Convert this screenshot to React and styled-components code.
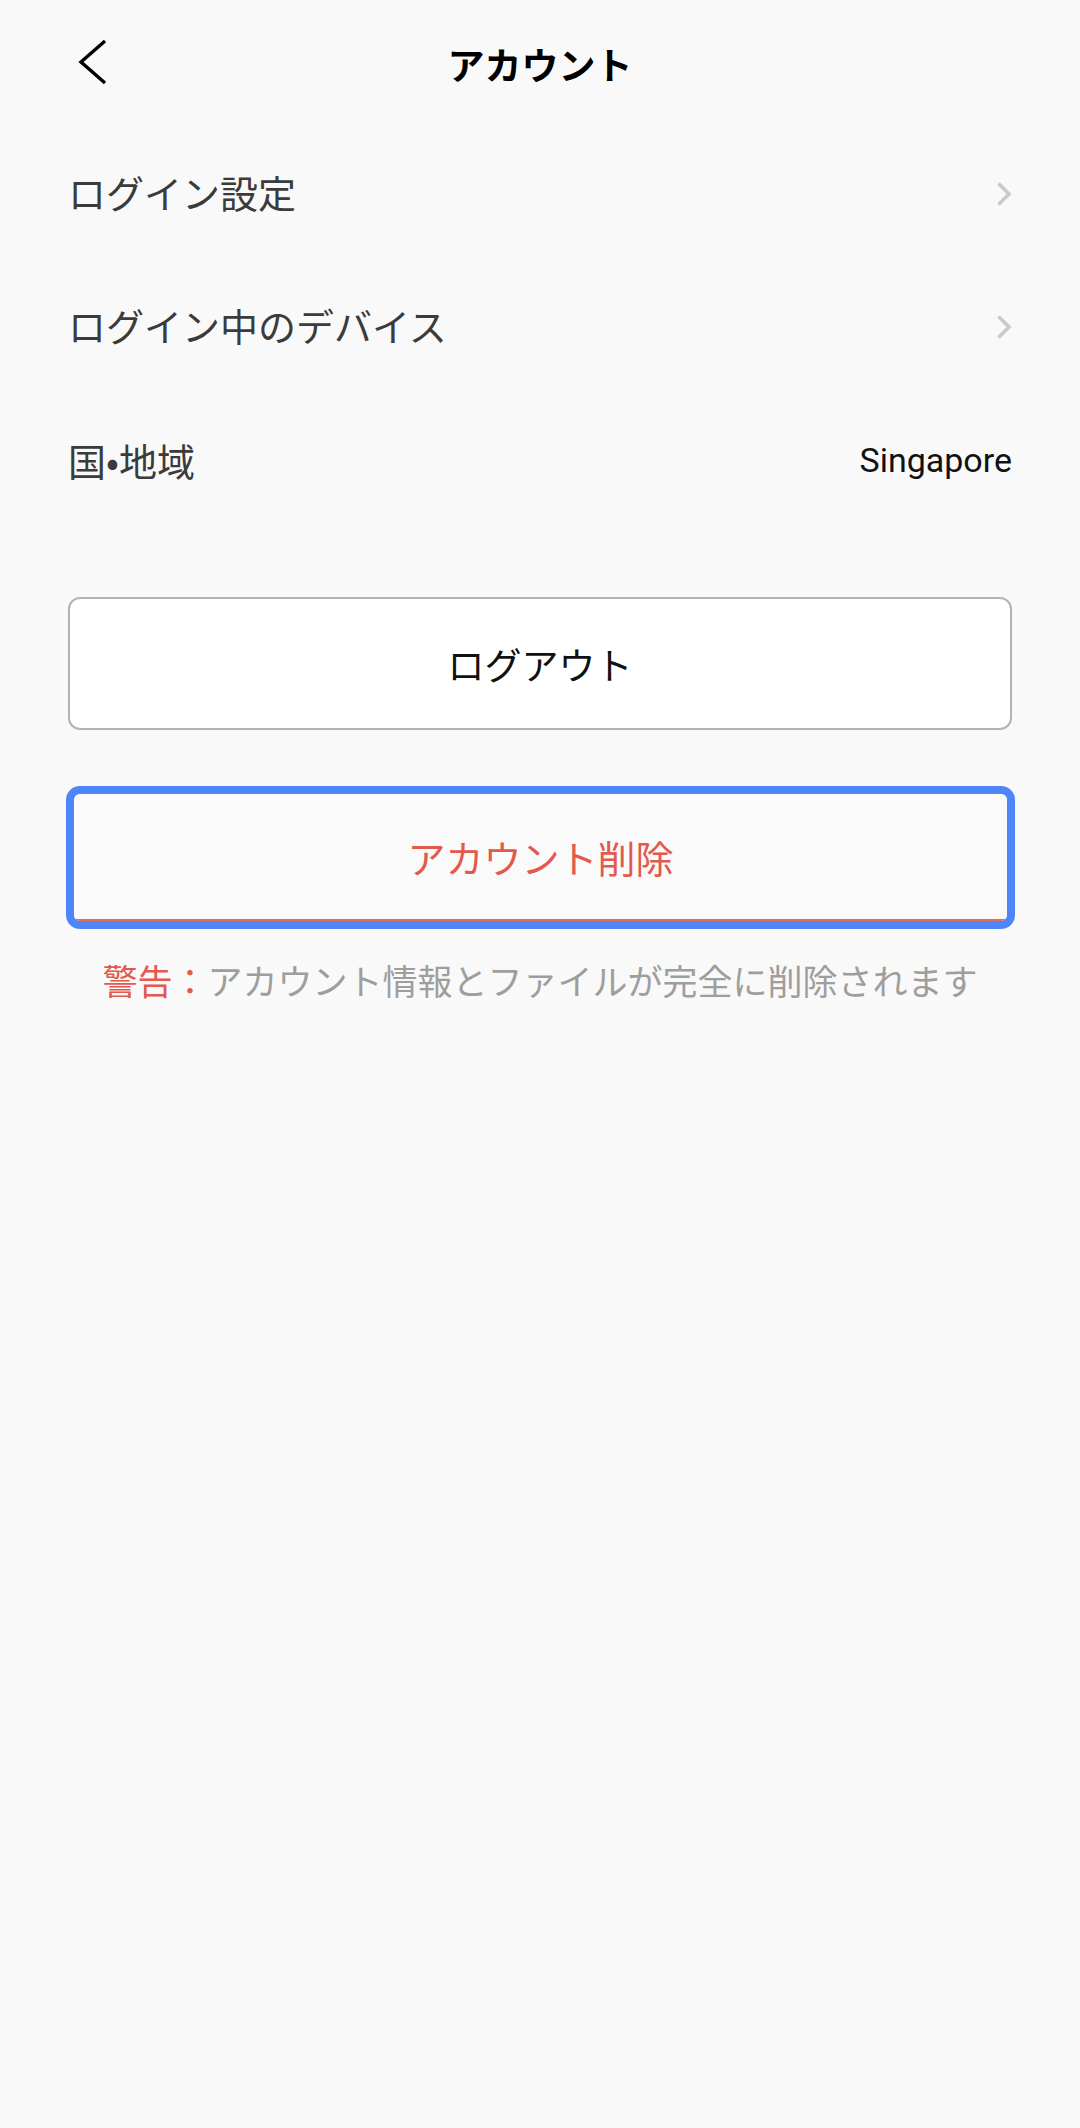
import React from "react";
import styled, { createGlobalStyle } from "styled-components";

const Global = createGlobalStyle`
  html, body { margin: 0; padding: 0; background: #f9f9f9; }
  body { font-family: "Noto Sans CJK JP", "Roboto", sans-serif; }
  * { box-sizing: border-box; }
`;

const Page = styled.div`
  width: 1080px;
  min-height: 2128px;
  background: #f9f9f9;
  display: flex;
  flex-direction: column;
`;

const Header = styled.header`
  height: 128px;
  display: grid;
  grid-template-columns: 1fr auto 1fr;
  align-items: center;
`;

const BackButton = styled.button`
  justify-self: start;
  margin-left: 78px;
  margin-top: -4px;
  padding: 0;
  border: 0;
  background: none;
  display: flex;
`;

const Title = styled.h1`
  margin: 0;
  font-size: 37px;
  font-weight: 700;
  color: #000;
  line-height: 1;
`;

const List = styled.div`
  display: flex;
  flex-direction: column;
  padding: 0 68px;
`;

const Row = styled.div`
  height: ${(p) => p.$h || 134}px;
  display: flex;
  align-items: center;
  justify-content: space-between;
`;

const Label = styled.span`
  font-size: 38px;
  color: #3b3b3b;
  line-height: 1;
  margin-top: -5px;
`;

const Value = styled.span`
  font-family: "Roboto", sans-serif;
  font-size: 34px;
  color: #111;
  line-height: 1;
  margin-top: -4px;
`;

const Actions = styled.div`
  display: flex;
  flex-direction: column;
  padding: 67px 68px 0;
`;

const OutlineButton = styled.button`
  height: 133px;
  width: 100%;
  background: #fff;
  border: 2px solid #b3b3b3;
  border-radius: 12px;
  font-family: "Noto Sans CJK JP", sans-serif;
  font-size: 37px;
  color: #111;
`;

const FocusRing = styled.div`
  margin: 56px -3px 0 -2px;
  border: 8px solid #4f86f7;
  border-radius: 14px;
  overflow: hidden;
`;

const DangerButton = styled.button`
  height: 127px;
  width: 100%;
  display: block;
  background: #fafafa;
  border: 0;
  border-bottom: 2px solid #e46a60;
  border-radius: 4px;
  font-family: "Noto Sans CJK JP", sans-serif;
  font-size: 38px;
  color: #e2594e;
`;

const Warning = styled.p`
  margin: 28px 0 0;
  text-align: center;
  font-size: 35px;
  line-height: 46px;
  color: #9e9e9e;
`;

const WarnTag = styled.span`
  color: #e2594e;
`;

const Chevron = () => (
  <svg width="16" height="26" viewBox="0 0 16 26">
    <path d="M2.5 2.5 L13 13 L2.5 23.5" fill="none" stroke="#cacaca" strokeWidth="3.6" />
  </svg>
);

export default function App() {
  return (
    <Page>
      <Global />
      <Header>
        <BackButton aria-label="back">
          <svg width="30" height="48" viewBox="0 0 30 48">
            <path d="M27 3 L3 24 L27 45" fill="none" stroke="#000" strokeWidth="3.4" />
          </svg>
        </BackButton>
        <Title>アカウント</Title>
        <div />
      </Header>
      <List>
        <Row $h={132}>
          <Label>ログイン設定</Label>
          <Chevron />
        </Row>
        <Row $h={134}>
          <Label>ログイン中のデバイス</Label>
          <Chevron />
        </Row>
        <Row $h={136}>
          <Label>国•地域</Label>
          <Value>Singapore</Value>
        </Row>
      </List>
      <Actions>
        <OutlineButton>ログアウト</OutlineButton>
        <FocusRing>
          <DangerButton>アカウント削除</DangerButton>
        </FocusRing>
        <Warning>
          <WarnTag>警告：</WarnTag>アカウント情報とファイルが完全に削除されます
        </Warning>
      </Actions>
    </Page>
  );
}
